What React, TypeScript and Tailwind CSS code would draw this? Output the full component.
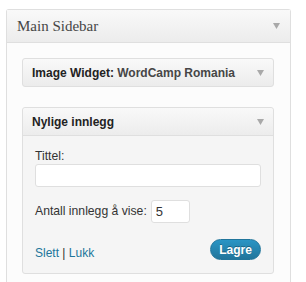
const Arrow = () => (
  <svg width="7" height="6" viewBox="0 0 7 6" className="shrink-0">
    <path d="M0 0 H7 L3.5 6 Z" fill="#a9a9a9" />
  </svg>
)

export default function App() {
  return (
    <div className="min-h-[282px] bg-white pt-[9px] pl-[6px] font-['Liberation_Sans',Arial,sans-serif] text-[#333]">
      <div className="w-[285px] rounded-t-[3px] border border-b-0 border-[#dfdfdf] bg-[#fcfcfc]">
        {/* sidebar header */}
        <div className="flex h-[33px] items-center justify-between border-b border-[#dfdfdf] bg-gradient-to-b from-[#f9f9f9] to-[#ececec] pl-[10px] pr-[10px]">
          <span className="font-['Liberation_Serif',Georgia,serif] text-[15px] text-[#464646]">Main Sidebar</span>
          <Arrow />
        </div>

        <div className="pt-[15px] pl-[15px] pr-[16px] pb-[20px]">
          {/* collapsed widget */}
          <div className="flex h-[29px] items-center justify-between rounded-[3px] border border-[#dfdfdf] bg-gradient-to-b from-[#f9f9f9] to-[#ececec] pl-[9px] pr-[9px]">
            <span className="text-[12px] font-bold text-[#222]">
              Image Widget: <span className="text-[#464646]">WordCamp Romania</span>
            </span>
            <Arrow />
          </div>

          {/* open widget */}
          <div className="mt-[20px] rounded-[3px] border border-[#dfdfdf] bg-[#f5f5f5]">
            <div className="flex h-[28px] items-center justify-between rounded-t-[3px] border-b border-[#dfdfdf] bg-gradient-to-b from-[#f9f9f9] to-[#ececec] pl-[9px] pr-[9px]">
              <span className="text-[12px] font-bold text-[#222]">Nylige innlegg</span>
              <Arrow />
            </div>
            <div className="px-[12px] pt-[13px] pb-[11px] text-[12.2px]">
              <label className="block leading-[15px]">Tittel:</label>
              <input
                type="text"
                className="block h-[23px] w-[226px] rounded-[3px] border border-[#dfdfdf] bg-white outline-none"
              />
              <div className="mt-[13px] flex items-center gap-[4px]">
                <span>Antall innlegg å vise:</span>
                <input
                  type="text"
                  defaultValue="5"
                  className="h-[23px] w-[39px] rounded-[3px] border border-[#dfdfdf] bg-white px-[4px] text-[13px] text-[#333] outline-none"
                />
              </div>
              <div className="mt-[14px] flex items-center justify-between">
                <span className="pt-[7px] text-[12px]">
                  <a className="text-[#21759b]">Slett</a> | <a className="text-[#21759b]">Lukk</a>
                </span>
                <button className="h-[21px] w-[51px] rounded-full border border-[#21759b] bg-gradient-to-b from-[#2a95c5] to-[#21759b] text-[12px] font-bold text-white [text-shadow:0_-1px_0_rgba(0,0,0,0.3)]">
                  Lagre
                </button>
              </div>
            </div>
          </div>
        </div>
      </div>
    </div>
  )
}
